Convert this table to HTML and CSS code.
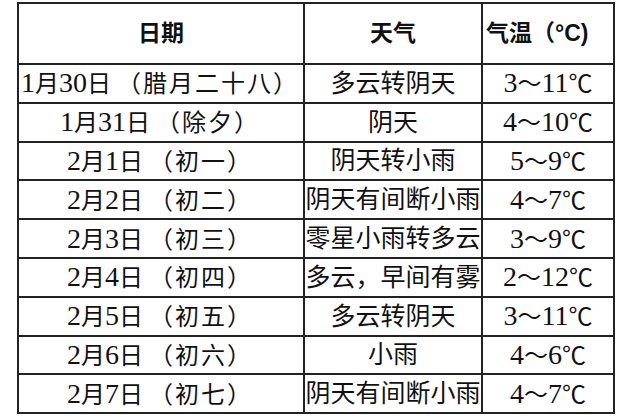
FILE: index.html
```html
<!DOCTYPE html>
<html lang="zh-CN">
<head>
<meta charset="utf-8">
<title>天气预报</title>
<link rel="stylesheet" href="styles.css">
</head>
<body>
<table class="weather">
  <colgroup>
    <col class="c-date">
    <col class="c-wx">
    <col class="c-temp">
  </colgroup>
  <thead>
    <tr class="head">
      <th>日期</th>
      <th>天气</th>
      <th class="th-temp">气温（°C)</th>
    </tr>
  </thead>
  <tbody>
    <tr><td class="date"><span class="num">1</span>月<span class="num">30</span>日<span class="lunar">（腊月二十八）</span></td><td>多云转阴天</td><td class="temp"><span class="num">3</span>～<span class="num">11</span>℃</td></tr>
    <tr><td class="date"><span class="num">1</span>月<span class="num">31</span>日<span class="lunar">（除夕）</span></td><td>阴天</td><td class="temp"><span class="num">4</span>～<span class="num">10</span>℃</td></tr>
    <tr><td class="date"><span class="num">2</span>月<span class="num">1</span>日<span class="lunar">（初一）</span></td><td>阴天转小雨</td><td class="temp"><span class="num">5</span>～<span class="num">9</span>℃</td></tr>
    <tr><td class="date"><span class="num">2</span>月<span class="num">2</span>日<span class="lunar">（初二）</span></td><td>阴天有间断小雨</td><td class="temp"><span class="num">4</span>～<span class="num">7</span>℃</td></tr>
    <tr><td class="date"><span class="num">2</span>月<span class="num">3</span>日<span class="lunar">（初三）</span></td><td>零星小雨转多云</td><td class="temp"><span class="num">3</span>～<span class="num">9</span>℃</td></tr>
    <tr><td class="date"><span class="num">2</span>月<span class="num">4</span>日<span class="lunar">（初四）</span></td><td>多云，早间有雾</td><td class="temp"><span class="num">2</span>～<span class="num">12</span>℃</td></tr>
    <tr><td class="date"><span class="num">2</span>月<span class="num">5</span>日<span class="lunar">（初五）</span></td><td>多云转阴天</td><td class="temp"><span class="num">3</span>～<span class="num">11</span>℃</td></tr>
    <tr><td class="date"><span class="num">2</span>月<span class="num">6</span>日<span class="lunar">（初六）</span></td><td>小雨</td><td class="temp"><span class="num">4</span>～<span class="num">6</span>℃</td></tr>
    <tr><td class="date"><span class="num">2</span>月<span class="num">7</span>日<span class="lunar">（初七）</span></td><td>阴天有间断小雨</td><td class="temp"><span class="num">4</span>～<span class="num">7</span>℃</td></tr>
  </tbody>
</table>
</body>
</html>
```
FILE: styles.css
```css
html, body {
  margin: 0;
  background: #ffffff;
}
body {
  padding: 2px 0 0 17px;
  font-family: "Liberation Serif", "Noto Sans CJK SC", serif;
  color: #111111;
}
.weather {
  border-collapse: separate;
  border-spacing: 0;
  table-layout: fixed;
  width: 598px;
  border-top: 2px solid #222222;
  border-left: 2px solid #222222;
}
.c-date { width: 286px; }
.c-wx { width: 178px; }
.c-temp { width: 132px; }
.weather th,
.weather td {
  border-right: 2px solid #222222;
  border-bottom: 2px solid #222222;
  padding: 0;
  text-align: center;
  vertical-align: middle;
  white-space: nowrap;
  box-sizing: border-box;
}
.weather th {
  height: 61px;
  font-family: "Liberation Sans", "Noto Sans CJK SC", sans-serif;
  font-weight: 700;
  font-size: 23px;
  line-height: 1;
}
.weather th.th-temp {
  text-align: left;
  padding-left: 3px;
}
.weather td {
  height: 38.8px;
  font-size: 25px;
  line-height: 1;
  font-weight: 400;
}
.weather td.date {
  font-size: 24px;
  padding-right: 2px;
}
.weather td.temp {
  font-size: 24px;
}
.num {
  font-size: 28px;
  line-height: 1;
}
.lunar {
  margin-left: 6px;
  letter-spacing: 2px;
}
```
